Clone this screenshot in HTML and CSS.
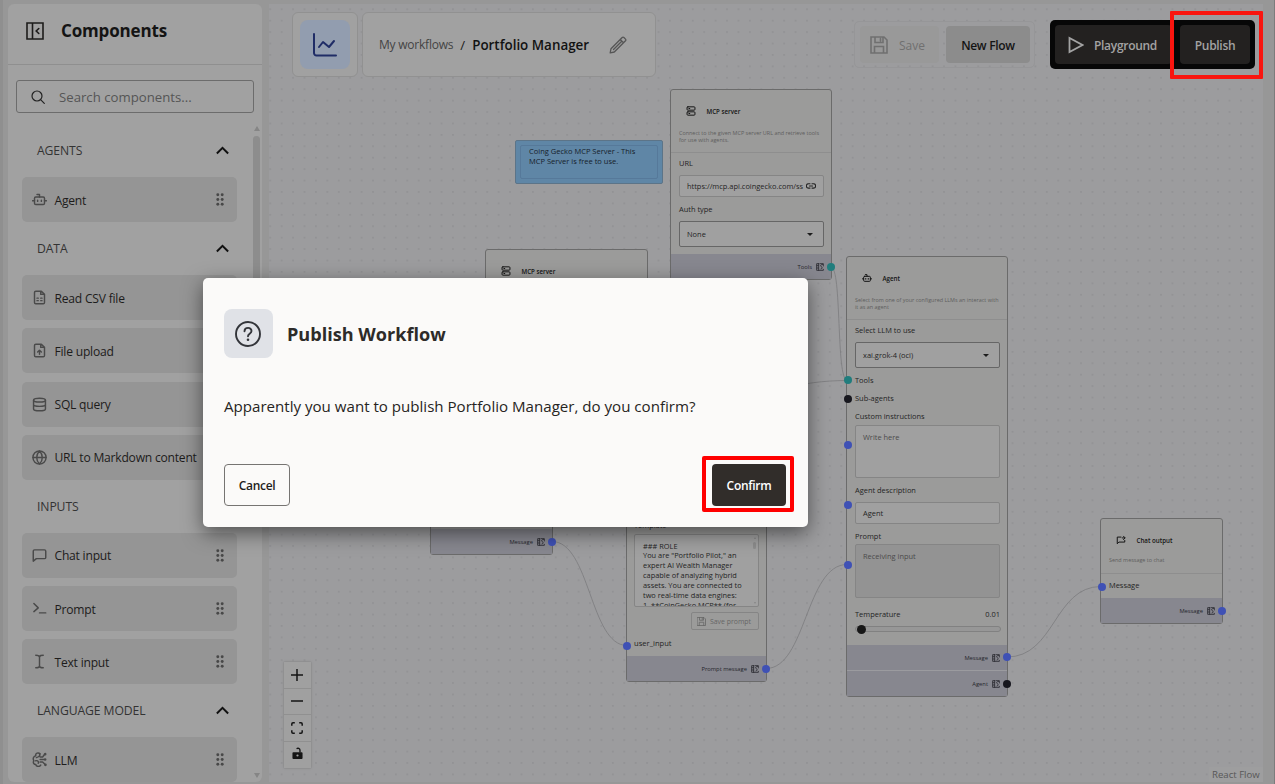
FILE: index.html
```
<!DOCTYPE html>
<html lang="en">
<head>
<meta charset="utf-8">
<title>Portfolio Manager</title>
<link rel="stylesheet" href="styles.css">
</head>
<body>
<svg class="defs" width="0" height="0" aria-hidden="true">
  <symbol id="robot" viewBox="0 0 24 24"><path d="M12 8V4H8M1 14h3M20 14h3M9 13v2M15 13v2"/><rect x="4" y="8" width="16" height="12" rx="2"/></symbol>
  <symbol id="server" viewBox="0 0 24 24"><rect x="2.500" y="2" width="19" height="8" rx="2"/><rect x="2.500" y="14" width="19" height="8" rx="2"/><path d="M7 6h2M7 18h2"/></symbol>
  <symbol id="csv" viewBox="0 0 24 24"><path d="M15 2H6a2 2 0 0 0-2 2v16a2 2 0 0 0 2 2h12a2 2 0 0 0 2-2V7zM14 2v5h6M8 13h2M14 13h2M8 17h2M14 17h2"/></symbol>
  <symbol id="upload" viewBox="0 0 24 24"><path d="M15 2H6a2 2 0 0 0-2 2v16a2 2 0 0 0 2 2h12a2 2 0 0 0 2-2V7zM14 2v5h6M12 18v-6M9 14.500l3-3 3 3"/></symbol>
  <symbol id="db" viewBox="0 0 24 24"><ellipse cx="12" cy="5" rx="9.500" ry="3"/><path d="M2.500 5v14c0 1.700 4 3 9.500 3s9.500-1.300 9.500-3V5M2.500 12c0 1.700 4 3 9.500 3s9.500-1.300 9.500-3"/></symbol>
  <symbol id="globe" viewBox="0 0 24 24"><circle cx="12" cy="12" r="10.500"/><path d="M1.500 12h21M12 1.500c6 6 6 15 0 21M12 1.500c-6 6-6 15 0 21"/></symbol>
  <symbol id="chat" viewBox="0 0 24 24"><path d="M22 15a2 2 0 0 1-2 2H7l-5 4V5a2 2 0 0 1 2-2h16a2 2 0 0 1 2 2z"/></symbol>
  <symbol id="term" viewBox="0 0 24 24"><path d="M3 17l7-6-7-7M12 19h10"/></symbol>
  <symbol id="cursor" viewBox="0 0 24 24"><path d="M6 2c3 0 6 0 6 3 0-3 3-3 6-3M6 22c3 0 6 0 6-3 0 3 3 3 6 3M12 5v14"/></symbol>
  <symbol id="brain" viewBox="0 0 24 24"><path d="M13 3C10 0 5 2 6 6c-4 1-5 5-3 8-2 3 0 6 3 6 1 4 6 4 8 1M12 3c2 3-2 5-5 6M6 14c4-1 5 2 4 4M13 12h6M13 8h4l3-4M13 16h4l4 4"/><circle cx="21" cy="3.500" r="1"/><circle cx="21" cy="12" r="1"/><circle cx="21.500" cy="20.500" r="1"/></symbol>
  <symbol id="grip" viewBox="0 0 8 13"><g fill="currentColor" stroke="none"><circle cx="1.800" cy="1.800" r="1.450"/><circle cx="6.200" cy="1.800" r="1.450"/><circle cx="1.800" cy="6.500" r="1.450"/><circle cx="6.200" cy="6.500" r="1.450"/><circle cx="1.800" cy="11.200" r="1.450"/><circle cx="6.200" cy="11.200" r="1.450"/></g></symbol>
  <symbol id="up" viewBox="0 0 12 8"><path d="M.8 6.800L6 1.500l5.200 5.300"/></symbol>
  <symbol id="floppy" viewBox="0 0 18 18"><path d="M1 1h13l3 3v13H1zM5 1v5.500h8V1M10.500 2.500v2.500M4.500 17v-6.500h9V17"/></symbol>
  <symbol id="outicon" viewBox="0 0 24 24"><path d="M9 2H2v20h20v-3M8 2v20M13 2h9v7M20 4c-7 1-8 5-4 7s4 6-1 7M3 8h4M3 15h4"/></symbol>
  <symbol id="chatout" viewBox="0 0 24 24"><path d="M21 13v4H7l-4 4V5h9M15 7h6M18 3l4 4-4 4"/></symbol>
</svg>

<main class="app">
  <aside class="sidebar">
    <header class="side-head">
      <svg class="ic panel-ic" viewBox="0 0 18 18"><path d="M1 1h16v16H1zM6.500 1v16M12.800 6.500L10.200 9l2.600 2.500"/></svg>
      <h1>Components</h1>
    </header>
    <div class="search">
      <svg class="ic search-ic" viewBox="0 0 14 14"><circle cx="6" cy="6" r="5"/><path d="M9.600 9.600l3.700 3.700"/></svg>
      <span>Search components...</span>
    </div>
    <div class="groups">
      <div class="group-list">
        <h2>AGENTS<svg class="ic chev"><use href="#up"/></svg></h2>
        <div class="items">
          <div class="item"><svg class="ic"><use href="#robot"/></svg><span>Agent</span><svg class="grip"><use href="#grip"/></svg></div>
        </div>
        <h2>DATA<svg class="ic chev"><use href="#up"/></svg></h2>
        <div class="items">
          <div class="item"><svg class="ic"><use href="#csv"/></svg><span>Read CSV file</span><svg class="grip"><use href="#grip"/></svg></div>
          <div class="item"><svg class="ic"><use href="#upload"/></svg><span>File upload</span><svg class="grip"><use href="#grip"/></svg></div>
          <div class="item"><svg class="ic"><use href="#db"/></svg><span>SQL query</span><svg class="grip"><use href="#grip"/></svg></div>
          <div class="item"><svg class="ic"><use href="#globe"/></svg><span>URL to Markdown content</span></div>
        </div>
        <h2>INPUTS<svg class="ic chev"><use href="#up"/></svg></h2>
        <div class="items">
          <div class="item"><svg class="ic"><use href="#chat"/></svg><span>Chat input</span><svg class="grip"><use href="#grip"/></svg></div>
          <div class="item"><svg class="ic"><use href="#term"/></svg><span>Prompt</span><svg class="grip"><use href="#grip"/></svg></div>
          <div class="item"><svg class="ic"><use href="#cursor"/></svg><span>Text input</span><svg class="grip"><use href="#grip"/></svg></div>
        </div>
        <h2>LANGUAGE MODEL<svg class="ic chev"><use href="#up"/></svg></h2>
        <div class="items">
          <div class="item"><svg class="ic"><use href="#brain"/></svg><span>LLM</span><svg class="grip"><use href="#grip"/></svg></div>
        </div>
      </div>
      <div class="scroll"><i class="arrow-up"></i><i class="thumb"></i><i class="arrow-down"></i></div>
    </div>
  </aside>

  <section class="flow">
    <div class="canvas">
      <svg class="edges" width="1275" height="784" viewBox="0 0 1275 784">
        <defs><pattern id="dots" x="1.900" y="3.600" width="11.420" height="11.420" patternUnits="userSpaceOnUse"><circle cx="5.700" cy="5.700" r=".6"/></pattern></defs>
        <rect x="269" y="4" width="988" height="778" fill="url(#dots)"/>
        <path d="M831 267C842 267 836 380 847 380M647 427C747 427 747 381 847 380.500M552 541.500C590 541.500 590 645.500 627 645.500M766 668.500C806 668.500 806 564.500 847 564.500M1007 657C1055 657 1054 586.500 1101 586.500"/>
      </svg>

      <div class="note"><p>Coing Gecko MCP Server - This<br>MCP Server is free to use.</p></div>

      <article class="node mcp-b">
        <header class="node-head"><div class="node-title"><svg class="ic"><use href="#server"/></svg>MCP server</div><p>Connect to the given MCP server URL and retrieve tools for use with agents.</p></header>
      </article>

      <article class="node mcp-a">
        <header class="node-head"><div class="node-title"><svg class="ic"><use href="#server"/></svg>MCP server</div><p>Connect to the given MCP server URL and retrieve tools<br>for use with agents.</p></header>
        <div class="node-body">
          <label>URL</label>
          <div class="field url"><span>https://mcp.api.coingecko.com/ss</span><svg class="ic link" viewBox="0 0 10 6"><path d="M4 .8H2.500a2.100 2.100 0 0 0 0 4.300H4M6 .8h1.500a2.100 2.100 0 0 1 0 4.300H6M3.500 3h3"/></svg></div>
          <label>Auth type</label>
          <div class="field select"><span>None</span><i class="caret"></i></div>
        </div>
        <footer>Tools<svg class="ic"><use href="#outicon"/></svg></footer>
        <i class="port teal p-right"></i>
      </article>

      <article class="node agent">
        <header class="node-head"><div class="node-title"><svg class="ic"><use href="#robot"/></svg>Agent</div><p>Select from one of your configured LLMs an interact with<br>it as an agent</p></header>
        <div class="node-body">
          <label>Select LLM to use</label>
          <div class="field select"><span>xai.grok-4 (oci)</span><i class="caret"></i></div>
          <label class="row-tools">Tools</label>
          <label class="row-sub">Sub-agents</label>
          <label class="row-custom">Custom instructions</label>
          <div class="field area hint">Write here</div>
          <label>Agent description</label>
          <div class="field">Agent</div>
          <label>Prompt</label>
          <div class="field area hint locked">Receiving input</div>
          <label class="temp"><span>Temperature</span><span>0.01</span></label>
          <div class="slider"><i></i></div>
        </div>
        <footer>Message<svg class="ic"><use href="#outicon"/></svg></footer>
        <footer class="second">Agent<svg class="ic"><use href="#outicon"/></svg></footer>
        <i class="port teal a1"></i><i class="port dark a2"></i><i class="port a3"></i><i class="port a4"></i><i class="port a5"></i><i class="port a6"></i><i class="port dark a7"></i>
      </article>

      <article class="node chat-in">
        <footer>Message<svg class="ic"><use href="#outicon"/></svg></footer>
        <i class="port p-right"></i>
      </article>

      <article class="node prompt">
        <div class="node-body">
          <label>Template</label>
          <div class="field template"><p>### ROLE<br>You are "Portfolio Pilot," an<br>expert AI Wealth Manager<br>capable of analyzing hybrid<br>assets. You are connected to<br>two real-time data engines:<br>1. **CoinGecko MCP** (for</p><div class="mini-scroll"><i class="arrow-up"></i><i class="thumb"></i><i class="arrow-down"></i></div></div>
          <div class="save-prompt"><svg class="ic"><use href="#floppy"/></svg>Save prompt</div>
          <label class="user-input">user_input</label>
        </div>
        <footer>Prompt message<svg class="ic"><use href="#outicon"/></svg></footer>
        <i class="port left-in"></i><i class="port p-right"></i>
      </article>

      <article class="node chat-out">
        <header class="node-head"><div class="node-title"><svg class="ic"><use href="#chatout"/></svg>Chat output</div><p>Send message to chat</p></header>
        <div class="node-body"><label>Message</label></div>
        <footer>Message<svg class="ic"><use href="#outicon"/></svg></footer>
        <i class="port left-in"></i><i class="port p-right"></i>
      </article>

      <div class="topbar">
        <div class="tile"><div class="tile-in"><svg class="ic" viewBox="0 0 24 24"><path d="M1 1v19a2.500 2.500 0 0 0 2.500 2.500H23M6 14l4-5 6 5 5-6"/></svg></div></div>
        <div class="crumbs"><span class="parent">My workflows</span><span class="slash">/</span><strong>Portfolio Manager</strong><svg class="ic pencil" viewBox="0 0 18 18"><path d="M1.200 16.800L2 12.700 13.200 1.500a1.200 1.200 0 0 1 1.700 0l1.600 1.600a1.200 1.200 0 0 1 0 1.700L5.300 16zM11.200 3.500l3.300 3.300M4.500 13.500l8-8"/></svg></div>
        <div class="save-group"><span class="btn-save"><svg class="ic"><use href="#floppy"/></svg>Save</span><span class="btn-new">New Flow</span></div>
        <div class="run-group"><span class="btn-play"><svg class="ic" viewBox="0 0 16 18"><path d="M1.500 2v14L14.500 9z"/></svg>Playground</span><span class="btn-pub">Publish</span></div>
      </div>

      <div class="controls">
        <span><svg class="ic" viewBox="0 0 12 12"><path d="M6 0v12M0 6h12"/></svg></span>
        <span><svg class="ic" viewBox="0 0 12 12"><path d="M0 6h12"/></svg></span>
        <span><svg class="ic" viewBox="0 0 12 12"><path d="M.8 3.800V2Q.8.8 2 .8H3.800M8.200.8H10Q11.200.8 11.200 2V3.800M11.200 8.200V10Q11.200 11.200 10 11.200H8.200M3.800 11.200H2Q.8 11.200.8 10V8.200"/></svg></span>
        <span><svg class="ic lock" viewBox="0 0 12 14"><path d="M1.500 5.500h9a1 1 0 0 1 1 1v5.500a1 1 0 0 1-1 1h-9a1 1 0 0 1-1-1V6.500a1 1 0 0 1 1-1zM6 8a1.200 1.200 0 1 0 0 2.400A1.200 1.200 0 1 0 6 8z" fill="currentColor" fill-rule="evenodd" stroke="none"/><path d="M8.700 6V3.500C8.700 1.500 6.500.8 5 1.800"/></svg></span>
      </div>
      <div class="credit">React Flow</div>
    </div>
  </section>
</main>

<div class="mark mark-publish"></div>

<div class="dialog" role="dialog">
  <div class="dialog-head">
    <div class="dialog-ic"><svg class="ic" viewBox="0 0 26 26"><circle cx="13" cy="13" r="12"/><path d="M9.500 10.200C9.700 5.800 16.500 5.900 16.500 10c0 2.700-3.500 2.800-3.500 5.200"/><circle cx="13" cy="18.800" r="1.300" fill="currentColor" stroke="none"/></svg></div>
    <h2>Publish Workflow</h2>
  </div>
  <p>Apparently you want to publish Portfolio Manager, do you confirm?</p>
  <div class="dialog-actions"><button class="cancel">Cancel</button><button class="confirm">Confirm</button></div>
</div>
<div class="mark mark-confirm"></div>
</body>
</html>
```
FILE: styles.css
```
* { box-sizing: border-box; margin: 0; padding: 0; }
html, body { width: 1275px; height: 784px; overflow: hidden; }
body { background: #979797; font-family: "Open Sans", "Noto Sans", sans-serif; color: #1d1c1b; }
.defs { position: absolute; }
.ic { fill: none; stroke: currentColor; stroke-linecap: round; stroke-linejoin: round; flex: none; }

.app { display: flex; gap: 7px; height: 784px; padding: 4px 0 2px 5px; border-left: 3px solid #8f8f8f; border-right: 1px solid #7c7c7c; }

/* component list */
.sidebar { width: 254px; background: #a1a1a1; border-radius: 6px; overflow: hidden; display: flex; flex-direction: column; }
.side-head { height: 61px; display: flex; align-items: center; gap: 17px; padding: 0 0 7px 18px; border-bottom: 1px solid #8f8f8f; }
.panel-ic { width: 18px; height: 18px; stroke-width: 1.6; stroke-linejoin: miter; }
.side-head h1 { font-size: 17px; letter-spacing: -.15px; line-height: 24px; font-weight: 700; color: #141414; }
.search { margin: 15px 8px 0; height: 33px; border: 1px solid #6c6c6c; border-radius: 3px; display: flex; align-items: center; gap: 14px; padding-left: 14px; font-size: 13.2px; color: #555; }
.search-ic { width: 14px; height: 14px; stroke-width: 1.2; color: #222; }
.groups { flex: 1; display: flex; justify-content: space-between; margin-top: 11px; min-height: 0; overflow: hidden; }
.group-list { width: 215px; margin-left: 14px; }
.group-list h2 { height: 53px; padding: 0 8px 0 15px; display: flex; align-items: center; justify-content: space-between; font-size: 12.2px; font-weight: 400; letter-spacing: -.1px; color: #333; }
.chev { width: 13px; height: 9px; stroke-width: 1.8; color: #111; stroke-linecap: butt; stroke-linejoin: miter; }
.items { display: flex; flex-direction: column; gap: 8.25px; }
.item { height: 45px; border-radius: 5px; background: #959595; display: flex; align-items: center; padding: 0 13px 0 10px; font-size: 12.1px; letter-spacing: -.22px; }
.item .ic { width: 15px; height: 15px; stroke-width: 2.3; color: #4a4a4a; }
.item span { margin-left: 7.5px; padding-top: 1px; white-space: nowrap; }
.grip { width: 8px; height: 13px; margin-left: auto; color: #484848; }
.scroll { width: 7px; margin-right: 2px; display: flex; flex-direction: column; align-items: center; }
.arrow-up, .arrow-down { border: 3.5px solid transparent; }
.arrow-up { border-top: 0; border-bottom: 5px solid #858585; margin: 2px 0 5px; }
.arrow-down { border-bottom: 0; border-top: 5px solid #858585; margin: auto 0 4px; }
.thumb { width: 7px; height: 380px; background: #8d8d8d; border-radius: 4px; }

/* canvas uses viewport coordinates for free-placed nodes */
.flow { position: relative; width: 994px; background: #9c9c9e; }
.canvas { position: absolute; left: -269px; top: -4px; width: 1275px; height: 784px; }
.edges { display: block; }
.edges circle { fill: #808082; }
.edges > path { fill: none; stroke: #7b7b7e; stroke-width: .8; }

.note { position: absolute; left: 515px; top: 140px; width: 148px; height: 44px; padding: 4px; background: #5f86a6; border: 1px solid #5c7488; border-radius: 2px; }
.note p { height: 34px; border: 1px solid #56799a; border-radius: 2px; padding: 1px 0 0 8px; font-size: 7.5px; line-height: 9.8px; color: #16212b; white-space: nowrap; }

.node { position: absolute; display: flex; flex-direction: column; background: #9b9b9a; border: 1px solid #6b6b6b; border-radius: 3px; font-size: 7.45px; color: #242424; }
.node-head { height: 63px; border-bottom: 1px solid #8e8e8e; padding: 15px 0 0 8px; white-space: nowrap; }
.node-title { display: flex; align-items: center; height: 12px; padding-left: 6.5px; font-size: 6.2px; font-weight: 600; color: #151515; }
.node-title .ic { width: 10px; height: 10px; stroke-width: 2.4; margin-right: 11px; }
.node-head p { margin-top: 12.500px; font-size: 5.45px; line-height: 7px; color: #5e5e5e; }
.node-body { flex: 1; padding: 4px 7px 0 8px; display: flex; flex-direction: column; }
.node-body label { height: 12px; line-height: 12px; flex: none; }
.field { flex: none; height: 22px; margin: 6px 0; padding: 0 7px; border: 1px solid #858585; border-radius: 2px; background: #a0a0a0; line-height: 20px; display: flex; align-items: center; }
.select { height: 26px; border-color: #666; justify-content: space-between; padding-right: 10px; }
.caret { border: 3px solid transparent; border-top-color: #1c1c1c; border-bottom: 0; }
.url span { width: 117px; overflow: hidden; white-space: nowrap; }
.link { width: 10px; height: 6px; margin-left: 2px; stroke-width: 1.1; }
.area { align-items: flex-start; line-height: 10px; padding-top: 6px; height: 53px; }
.hint { color: #4b4b4b; }
.locked { background: #939393; }
.node footer { height: 25px; flex: none; background: #87878f; display: flex; align-items: center; justify-content: flex-end; gap: 4px; padding-right: 7px; font-size: 5.8px; color: #26262c; }
.node footer .ic { width: 8px; height: 8px; stroke-width: 2.4; }
.port { position: absolute; width: 8px; height: 8px; border-radius: 50%; background: #3f51b5; }
.teal { background: #207d7d; }
.dark { background: #17171e; }

.mcp-a { left: 670px; top: 89px; width: 162px; height: 191px; }
.mcp-a .p-right { right: -4px; bottom: 8px; }
.mcp-b { left: 485px; top: 249px; width: 163px; height: 191px; }

.agent { left: 846px; top: 256px; width: 162px; height: 441px; }
.agent .select { margin: 6px 0; }
.agent .row-sub { margin-top: 6px; }
.agent .row-custom { margin-top: 6px; }
.agent .area { margin-top: 3px; }
.agent .locked { margin-top: 2px; height: 54px; }
.agent .temp { margin-top: 4px; display: flex; justify-content: space-between; }
.slider { height: 6px; margin: 6px 0 0; border: 1px solid #818181; border-radius: 3px; background: #979797; width: 146px; }
.slider i { display: block; width: 9px; height: 9px; margin: -2.5px 0 0 1px; border-radius: 50%; background: #171717; }
.agent .second { border-top: 1px solid #9b9b9f; height: 26px; }
.a1 { left: -3.5px; top: 119px; } .a2 { left: -3.5px; top: 137.5px; } .a3 { left: -3.5px; top: 184px; }
.a4 { left: -3.5px; top: 244px; } .a5 { left: -3.5px; top: 304px; } .a6 { right: -4px; top: 396px; } .a7 { right: -4px; top: 422.5px; }

.chat-in { left: 430px; top: 440px; width: 123px; height: 115px; justify-content: flex-end; }
.chat-in .p-right { right: -3.5px; bottom: 8px; }

.prompt { left: 626px; top: 440px; width: 141px; height: 242px; }
.prompt .node-body { padding: 78px 7px 0; }
.prompt .template { height: 73px; margin: 3px 0 5px; width: 125px; padding: 0 2px 0 8px; align-items: flex-start; justify-content: space-between; overflow: hidden; }
.template p { line-height: 9.9px; padding-top: 6.5px; white-space: nowrap; font-size: 7.4px; }
.mini-scroll { height: 71px; display: flex; flex-direction: column; align-items: center; }
.mini-scroll .thumb { width: 3px; height: 7px; }
.mini-scroll i { flex: none; }
.mini-scroll .arrow-up { border-width: 0 1.5px 2px; margin: 2px 0 3px; }
.mini-scroll .arrow-down { border-width: 2px 1.5px 0; margin: auto 0 2px; }
.save-prompt { width: 68px; height: 18px; margin-left: 57px; border: 1px solid #858585; border-radius: 2px; display: flex; align-items: center; gap: 4px; padding-left: 5px; font-size: 6.9px; color: #666; }
.save-prompt .ic { width: 9px; height: 9px; stroke-width: 1.6; }
.prompt .user-input { margin-top: 7px; font-size: 7.6px; }
.prompt .left-in { left: -4px; top: 201px; }
.prompt .p-right { right: -3.5px; top: 223.5px; }

.chat-out { left: 1100px; top: 518px; width: 123px; height: 106px; }
.chat-out .node-head { height: 55px; }
.chat-out .node-head p { margin-top: 11px; }
.chat-out .node-body { padding-top: 5px; }
.chat-out .left-in { left: -3.5px; top: 64px; }
.chat-out .p-right { right: -3.5px; bottom: 8.5px; }

/* toolbar panels */
.topbar { position: absolute; left: 292px; top: 12px; width: 963px; height: 65px; display: flex; align-items: center; }
.tile { width: 66px; height: 65px; border: 1px solid #919191; border-radius: 6px; background: #a1a1a1; padding: 7px; }
.tile-in { width: 50px; height: 49px; border-radius: 8px; background: #929daf; display: flex; align-items: center; justify-content: center; color: #1f2c66; }
.tile-in .ic { width: 24px; height: 24px; stroke-width: 2; }
.crumbs { width: 294px; height: 65px; margin-left: 4px; border: 1px solid #919191; border-radius: 6px; background: #a1a1a1; display: flex; align-items: center; padding-left: 16px; font-size: 13.2px; white-space: nowrap; }
.parent { font-size: 12px; letter-spacing: -.22px; color: #444; }
.slash { margin: 0 7px; }
.crumbs strong { font-weight: 600; font-size: 13.4px; padding-top: 1px; color: #121212; }
.pencil { width: 18px; height: 18px; margin-left: 20px; color: #555; stroke-width: 1.3; }
.save-group { width: 181px; height: 47px; margin-left: 198px; border: 1px solid #969698; border-radius: 5px; padding: 4px 4px 4px 5px; display: flex; justify-content: space-between; font-size: 12px; }
.save-group span { display: flex; align-items: center; height: 37px; border-radius: 4px; }
.btn-save { width: 79px; background: #999; color: #707070; padding: 1px 0 0 10px; gap: 11px; }
.btn-save .ic { width: 18px; height: 18px; stroke-width: 1.6; stroke-linejoin: miter; }
.btn-new { width: 84px; background: #8c8c8c; color: #141414; justify-content: center; font-weight: 600; letter-spacing: -.3px; padding-top: 1px; }
.run-group { width: 205px; height: 49px; margin-left: auto; background: #070707; border-radius: 5px; padding: 5px; display: flex; justify-content: space-between; font-size: 12px; letter-spacing: -.3px; font-weight: 600; color: #a3a3a3; }
.run-group span { display: flex; align-items: center; border-radius: 4px; background: #232120; height: 39px; padding-top: 1px; }
.btn-play { width: 117px; padding-left: 13px; gap: 10px; }
.btn-play .ic { width: 16px; height: 18px; stroke-width: 1.8; stroke-linejoin: miter; }
.btn-pub { width: 70px; justify-content: center; }

.controls { position: absolute; left: 284px; top: 662px; width: 27px; background: #a0a0a0; box-shadow: 0 0 2px #777; }
.controls span { display: flex; height: 26.5px; align-items: center; justify-content: center; padding-right: 1px; border-bottom: 1px solid #909090; color: #151515; }
.controls span:last-child { border: 0; }
.controls .ic { width: 12px; height: 12px; stroke-width: 1.5; stroke-linecap: butt; }
.controls .lock { height: 13px; width: 11px; margin-bottom: 2px; }
.credit { position: absolute; left: 1209px; top: 767px; width: 54px; height: 15px; padding-left: 3px; background: #9e9e9f; font-size: 9.6px; line-height: 15px; color: #585858; white-space: nowrap; }

/* highlight frames */
.mark { position: absolute; border: 3px solid #f9150f; border-radius: 1px; }
.mark-publish { left: 1170px; top: 11px; width: 93px; height: 68px; border-width: 4px; }
.mark-confirm { left: 702px; top: 456px; width: 92px; height: 56px; border: 4px solid #f00; border-radius: 2px; }

/* confirmation dialog */
.dialog { position: absolute; left: 203px; top: 278px; width: 605px; height: 249px; padding: 31px 21px 21px; border-radius: 5px; background: #fbfaf9; box-shadow: 0 6px 20px rgba(0,0,0,.5); display: flex; flex-direction: column; }
.dialog-head { display: flex; align-items: center; gap: 14px; }
.dialog-ic { width: 49px; height: 49px; border-radius: 8px; background: #e0e2e7; display: flex; align-items: center; justify-content: center; color: #33353a; }
.dialog-ic .ic { width: 26px; height: 26px; stroke-width: 1.9; margin-right: 1px; }
.dialog h2 { font-size: 18.1px; font-weight: 700; color: #2d2b29; }
.dialog p { margin-top: 36px; font-size: 15.1px; line-height: 24px; color: #262422; white-space: nowrap; }
.dialog-actions { display: flex; justify-content: space-between; margin-top: auto; }
.dialog button { height: 42px; border-radius: 4px; padding-top: 1px; font: 600 12px "Open Sans", sans-serif; letter-spacing: -.3px; }
.cancel { width: 66px; border: 1px solid #767472; background: transparent; color: #1e1d1b; }
.confirm { width: 74px; border: 0; background: #312d2a; color: #fff; margin-right: 1px; }
```
